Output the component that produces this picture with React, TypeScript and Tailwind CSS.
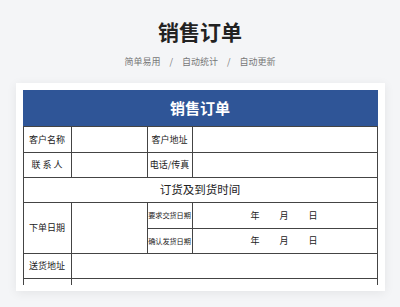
import React from "react";

const font = { fontFamily: '"Noto Sans CJK SC", "Noto Sans", sans-serif' };

export default function App() {
  const cell = "bg-white flex items-center justify-center text-[#222] whitespace-nowrap";
  return (
    <div className="w-[400px] h-[307px] bg-[#f4f5f7] flex flex-col items-center overflow-hidden" style={font}>
      <div className="pt-[16px] text-[21px] leading-[30px] font-bold text-[#222]">销售订单</div>
      <div className="mt-[9px] flex items-center text-[9px] leading-[14px] text-[#777]">
        <span>简单易用</span>
        <span className="mx-[9px]">/</span>
        <span>自动统计</span>
        <span className="mx-[9px]">/</span>
        <span>自动更新</span>
      </div>
      <div className="mt-[14px] w-[369px] bg-white px-[7px] pt-[7px] pb-[6px] shadow-[0_2px_10px_rgba(0,0,0,0.07)]">
        <div className="w-[355px] h-[195px] overflow-hidden">
          <div className="h-[36px] bg-[#2f5597] flex items-center justify-center text-white text-[15px] font-bold">
            销售订单
          </div>
          <div className="grid grid-cols-[47px_75px_44px_184px] grid-rows-[25px_24px_24px_25px_24px_24px_24px] gap-px bg-[#444] p-px">
            <div className={`${cell} text-[9px]`}>客户名称</div>
            <div className={cell}></div>
            <div className={`${cell} text-[9px]`}>客户地址</div>
            <div className={cell}></div>

            <div className={`${cell} text-[9px]`}>联 系 人</div>
            <div className={cell}></div>
            <div className={`${cell} text-[9px]`}>电话/传真</div>
            <div className={cell}></div>

            <div className={`${cell} col-span-4 text-[11.5px]`}>订货及到货时间</div>

            <div className={`${cell} row-span-2 text-[9px]`}>下单日期</div>
            <div className={`${cell} row-span-2`}></div>
            <div className={`${cell} text-[7.2px] tracking-[-0.1px]`}>要求交货日期</div>
            <div className={`${cell} !justify-start pl-[58px] gap-[20px] text-[9px]`}>
              <span>年</span>
              <span>月</span>
              <span>日</span>
            </div>
            <div className={`${cell} text-[7.2px] tracking-[-0.1px]`}>确认发货日期</div>
            <div className={`${cell} !justify-start pl-[58px] gap-[20px] text-[9px]`}>
              <span>年</span>
              <span>月</span>
              <span>日</span>
            </div>

            <div className={`${cell} text-[9px]`}>送货地址</div>
            <div className={`${cell} col-span-3`}></div>

            <div className={cell}></div>
            <div className={`${cell} col-span-3`}></div>
          </div>
        </div>
      </div>
    </div>
  );
}
